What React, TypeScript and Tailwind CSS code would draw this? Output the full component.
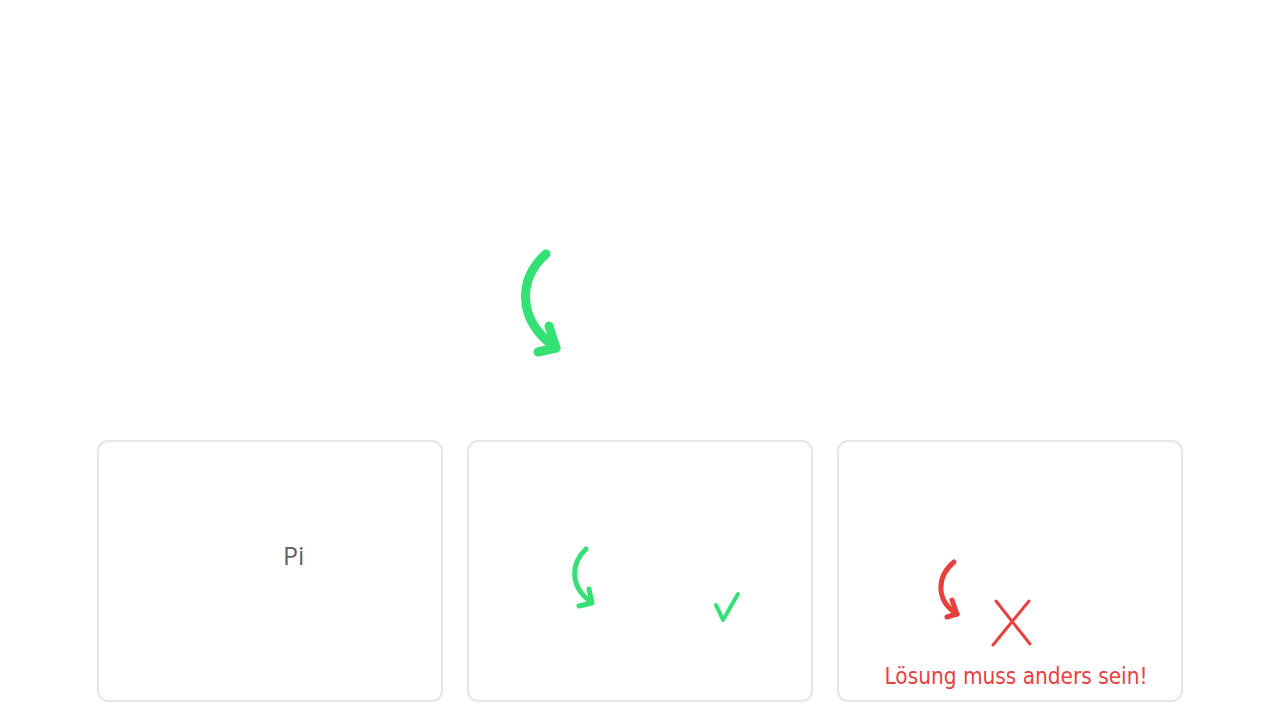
import React from 'react';

const GREEN = '#33e175';
const RED = '#e8403f';

// großer Pfeil oben
const BigArrow = () => (
  <svg width="60" height="120" viewBox="0 0 60 120" fill="none">
    <path d="M31 10 C5 32 -1 74 41 104" stroke={GREEN} strokeWidth="9" strokeLinecap="round" fill="none" />
    <path d="M34 82 L41 104 L23 108" stroke={GREEN} strokeWidth="9" strokeLinecap="round" strokeLinejoin="round" fill="none" />
  </svg>
);

const Card: React.FC<{ children?: React.ReactNode }> = ({ children }) => (
  <div className="relative w-[346px] h-[262px] rounded-[11px] border-2 border-[#e6e6e6] bg-white overflow-hidden">
    {children}
  </div>
);

export default function App() {
  return (
    <div className="w-[1280px] h-[720px] bg-white overflow-hidden flex flex-col">
      <div className="h-[440px] pt-[244px] pl-[515px]">
        <BigArrow />
      </div>

      <div className="flex justify-center gap-6">
        {/* Karte 1 */}
        <Card>
          <div className="pt-[98px] pl-[184px] text-[25px] leading-[30px] text-[#626262] font-['Open_Sans','Noto_Sans',sans-serif]">
            Pi
          </div>
        </Card>

        {/* Karte 2: richtig */}
        <Card>
          <svg className="absolute -left-[2px] -top-[2px]" width="346" height="262" viewBox="0 0 346 262" fill="none">
            <path d="M119 109 C104 123 102 146 124 162" stroke={GREEN} strokeWidth="5" strokeLinecap="round" />
            <path d="M122 149 L125 163 L112 166" stroke={GREEN} strokeWidth="5" strokeLinecap="round" strokeLinejoin="round" />
            <path d="M249 165 L256 180 L271 154" stroke={GREEN} strokeWidth="4" strokeLinecap="round" strokeLinejoin="round" />
          </svg>
        </Card>

        {/* Karte 3: falsch */}
        <Card>
          <svg className="absolute -left-[2px] -top-[2px]" width="346" height="262" viewBox="0 0 346 262" fill="none">
            <path d="M117 122 C100 136 98 160 120 174" stroke={RED} strokeWidth="5" strokeLinecap="round" />
            <path d="M115 160 L120 174 L110 177" stroke={RED} strokeWidth="5" strokeLinecap="round" strokeLinejoin="round" />
            <path d="M156 205 L192 161 M159 161 L193 204" stroke={RED} strokeWidth="3" strokeLinecap="round" />
          </svg>
          <div className="absolute left-0 right-0 bottom-[10px] pl-[12px] text-center text-[22.4px] leading-[28px] text-[#e8403f] font-['DejaVu_Sans_Condensed','DejaVu_Sans',sans-serif]">
            Lösung muss anders sein!
          </div>
        </Card>
      </div>
    </div>
  );
}
